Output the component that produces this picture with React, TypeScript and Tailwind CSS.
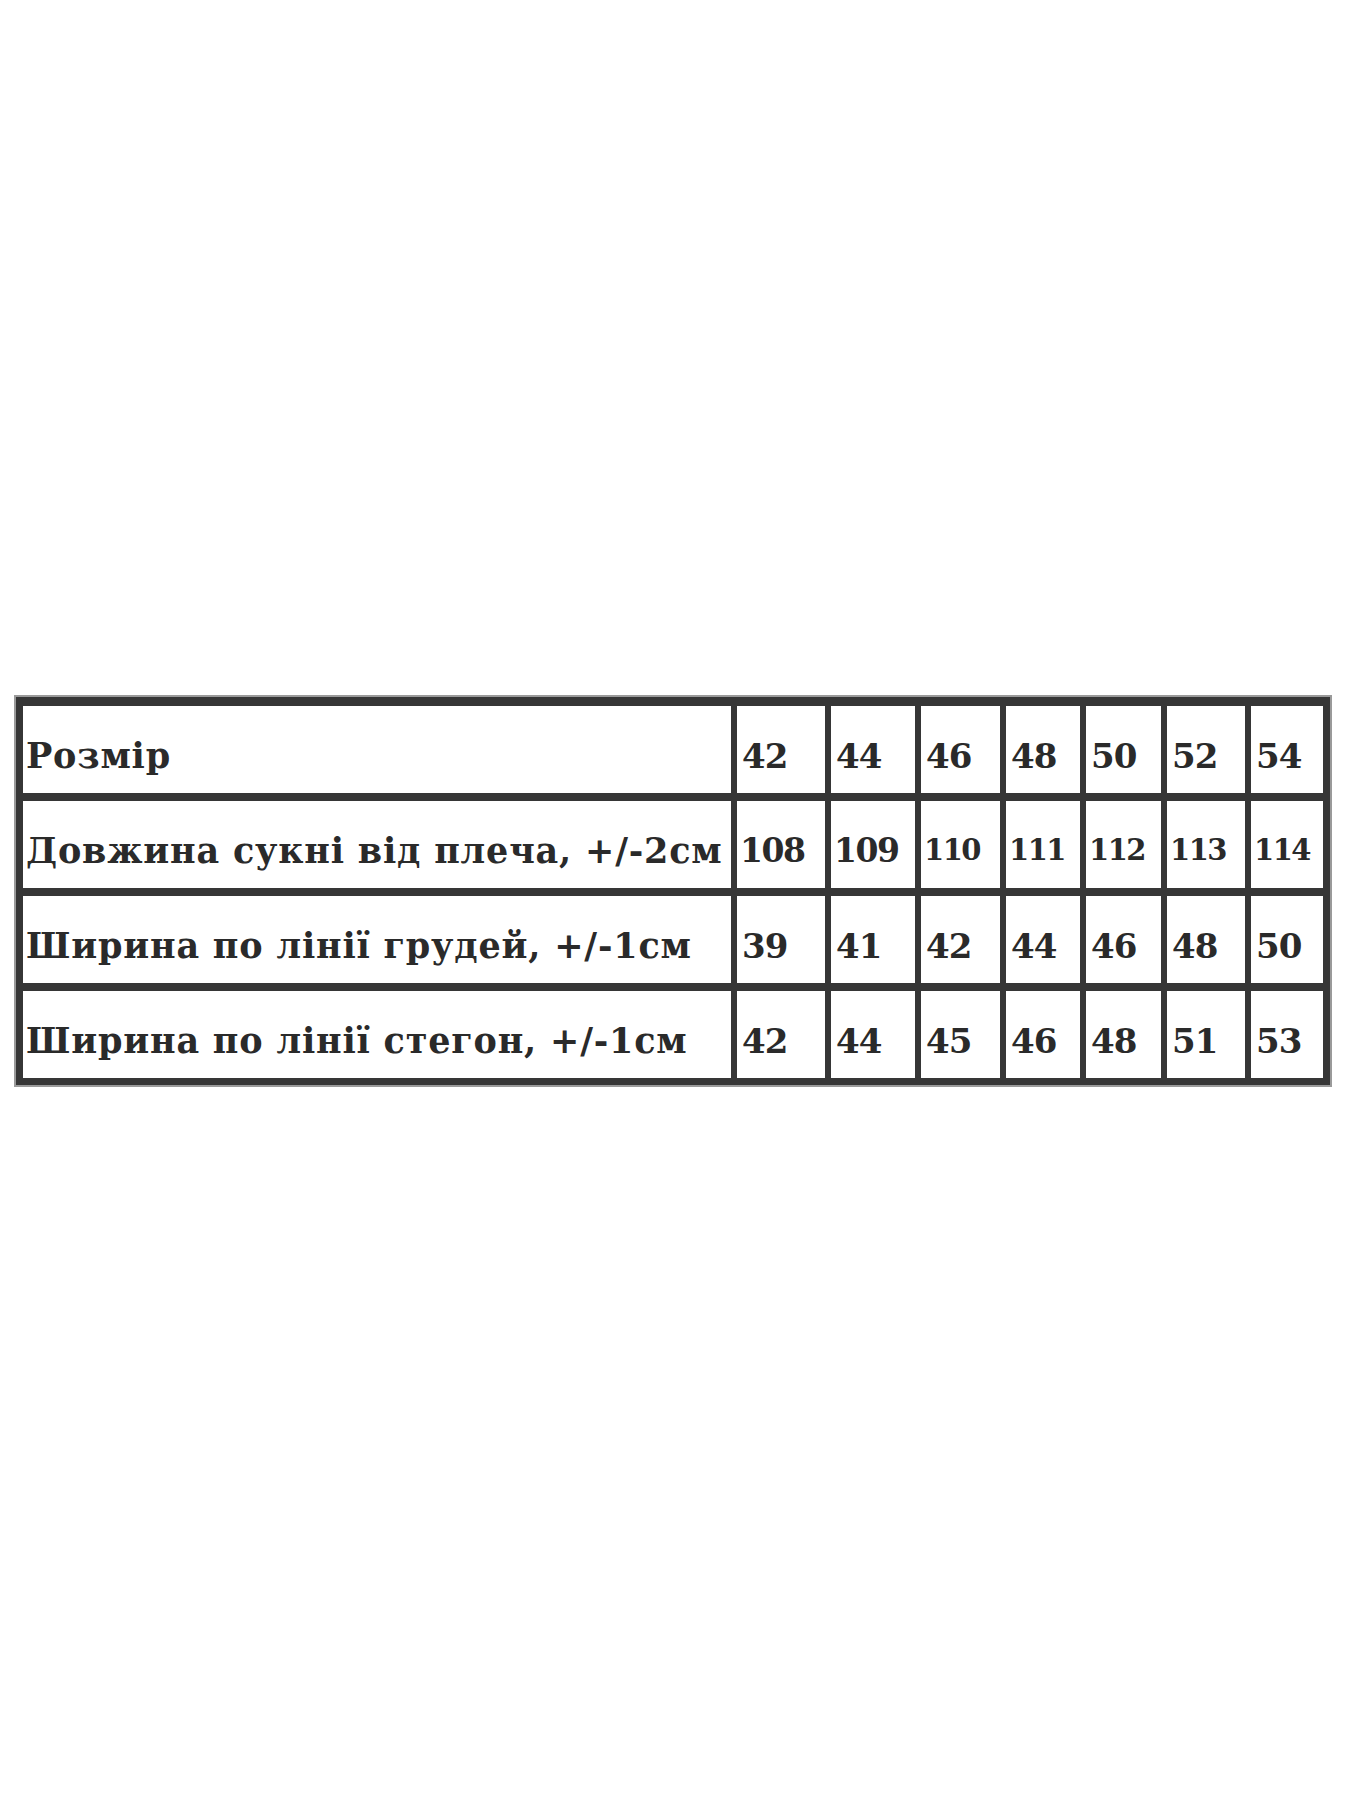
import React from 'react';

// ==================== Data ====================

const SIZES = ['42', '44', '46', '48', '50', '52', '54'];

const ROWS: { label: string; values: string[] }[] = [
  { label: 'Довжина сукні від плеча, +/-2см', values: ['108', '109', '110', '111', '112', '113', '114'] },
  { label: 'Ширина по лінії грудей, +/-1см', values: ['39', '41', '42', '44', '46', '48', '50'] },
  { label: 'Ширина по лінії стегон, +/-1см', values: ['42', '44', '45', '46', '48', '51', '53'] },
];

const cellBase = "bg-white h-[87px] flex items-center pt-[12px] whitespace-nowrap text-[#2a2a2a] leading-none font-bold font-['DejaVu_Serif',serif]";

// ==================== Cells ====================

function LabelCell({ children }: { children: React.ReactNode }) {
  return <div className={`${cellBase} pl-[3px] text-[35px] tracking-[0.8px]`}>{children}</div>;
}

function ValueCell({ value, col }: { value: string; col: number }) {
  // three-digit values are set tighter so they stay inside the narrow columns
  let sizing = 'text-[34px] tracking-[-1px] pl-[5px]';
  if (value.length > 2) {
    sizing = col < 2 ? 'text-[33px] tracking-[-1.5px] pl-[3px]' : 'text-[29px] tracking-[-1.5px] pl-[3px]';
  }
  return <div className={`${cellBase} ${sizing}`}>{value}</div>;
}

// ==================== Main Component ====================

export default function App() {
  return (
    <div className="min-h-[1800px] w-[1350px] bg-white pt-[695px] pl-[14px]">
      {/* Size chart */}
      <div className="inline-block border-2 border-[#9a9a9a]">
        <div className="grid grid-cols-[708px_88px_84px_79px_74px_75px_78px_72px] gap-x-[6px] gap-y-[8px] bg-[#363636] px-[7px] pt-[9px] pb-[7px]">
          <LabelCell>Розмір</LabelCell>
          {SIZES.map((s, i) => (
            <ValueCell key={s} value={s} col={i} />
          ))}
          {ROWS.map((row) => (
            <React.Fragment key={row.label}>
              <LabelCell>{row.label}</LabelCell>
              {row.values.map((v, i) => (
                <ValueCell key={i} value={v} col={i} />
              ))}
            </React.Fragment>
          ))}
        </div>
      </div>
    </div>
  );
}
